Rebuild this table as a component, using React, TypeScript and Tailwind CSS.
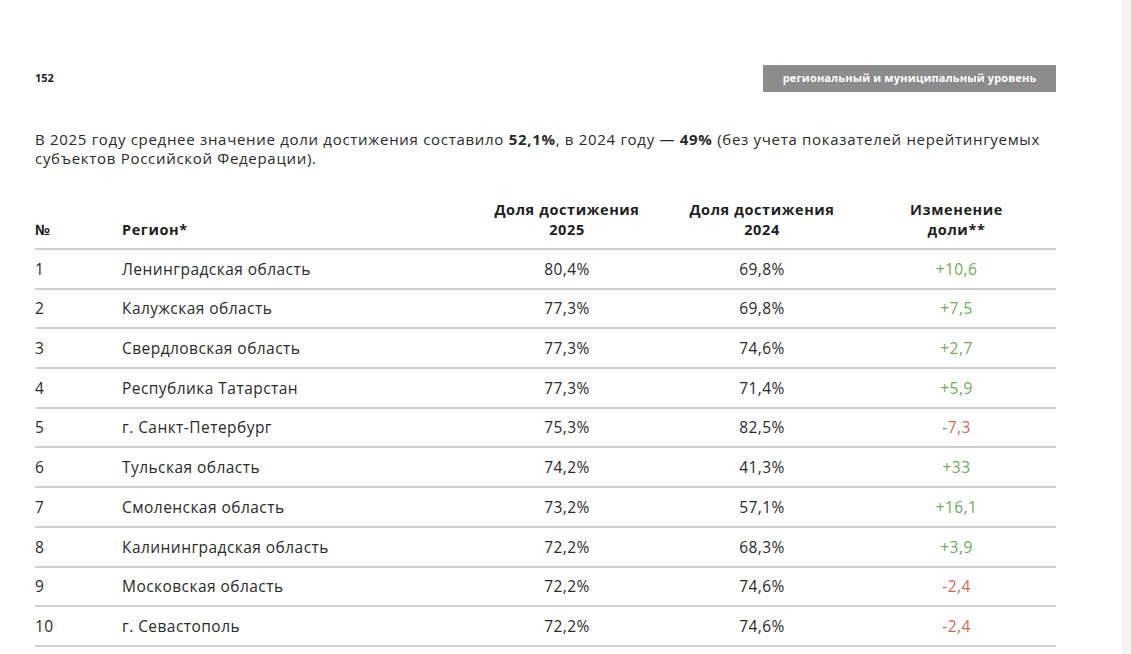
import React from "react";

const rows = [
  { n: 1, region: "Ленинградская область", a: "80,4%", b: "69,8%", d: "+10,6" },
  { n: 2, region: "Калужская область", a: "77,3%", b: "69,8%", d: "+7,5" },
  { n: 3, region: "Свердловская область", a: "77,3%", b: "74,6%", d: "+2,7" },
  { n: 4, region: "Республика Татарстан", a: "77,3%", b: "71,4%", d: "+5,9" },
  { n: 5, region: "г. Санкт-Петербург", a: "75,3%", b: "82,5%", d: "-7,3" },
  { n: 6, region: "Тульская область", a: "74,2%", b: "41,3%", d: "+33" },
  { n: 7, region: "Смоленская область", a: "73,2%", b: "57,1%", d: "+16,1" },
  { n: 8, region: "Калининградская область", a: "72,2%", b: "68,3%", d: "+3,9" },
  { n: 9, region: "Московская область", a: "72,2%", b: "74,6%", d: "-2,4" },
  { n: 10, region: "г. Севастополь", a: "72,2%", b: "74,6%", d: "-2,4" },
];

const App = () => {
  return (
    <div className="flex h-[654px] w-[1131px] bg-white font-['Open_Sans',sans-serif] text-[#2a2a2a] overflow-hidden">
      <div className="w-[1122px] pl-[35px] pt-[65px]">
        <div className="w-[1021px]">
          <div className="flex items-center justify-between h-[27px]">
            <span className="text-[11px] font-bold text-[#222]">152</span>
            <div className="w-[293px] h-[27px] bg-[#8c8c8c] flex items-center justify-center text-[11px] font-bold tracking-[0.15px] text-white">
              региональный и муниципальный уровень
            </div>
          </div>
          <p className="mt-[38px] text-[15px] leading-[19px] tracking-[0.7px] text-[#2a2a2a] w-[1021px]">
            В 2025 году среднее значение доли достижения составило <b>52,1%</b>, в 2024 году — <b>49%</b> (без учета показателей нерейтингуемых субъектов Российской Федерации).
          </p>
          <div className="mt-[31px]">
            <div className="flex items-end h-[51px] pb-[8px] border-b-2 border-[#cfcfcf] text-[14.5px] font-bold leading-[20px] tracking-[0.6px] text-[#1e1e1e]">
              <div className="w-[87px]">№</div>
              <div className="w-[345px]">Регион*</div>
              <div className="w-[200px] text-center">Доля достижения<br />2025</div>
              <div className="w-[190px] text-center">Доля достижения<br />2024</div>
              <div className="w-[199px] text-center">Изменение<br />доли**</div>
            </div>
            {rows.map((r) => (
              <div key={r.n} className="flex items-center h-[39.7px] pt-[1px] border-b-2 border-[#cfcfcf] text-[15.5px] tracking-[0.45px]">
                <div className="w-[87px]">{r.n}</div>
                <div className="w-[345px]">{r.region}</div>
                <div className="w-[200px] text-center">{r.a}</div>
                <div className="w-[190px] text-center">{r.b}</div>
                <div className={`w-[199px] text-center ${r.d.startsWith("-") ? "text-[#cf6a50]" : "text-[#6fab5c]"}`}>
                  {r.d}
                </div>
              </div>
            ))}
          </div>
        </div>
      </div>
      <div className="flex-1 bg-[#f4f4f4]" />
    </div>
  );
};

export default App;
